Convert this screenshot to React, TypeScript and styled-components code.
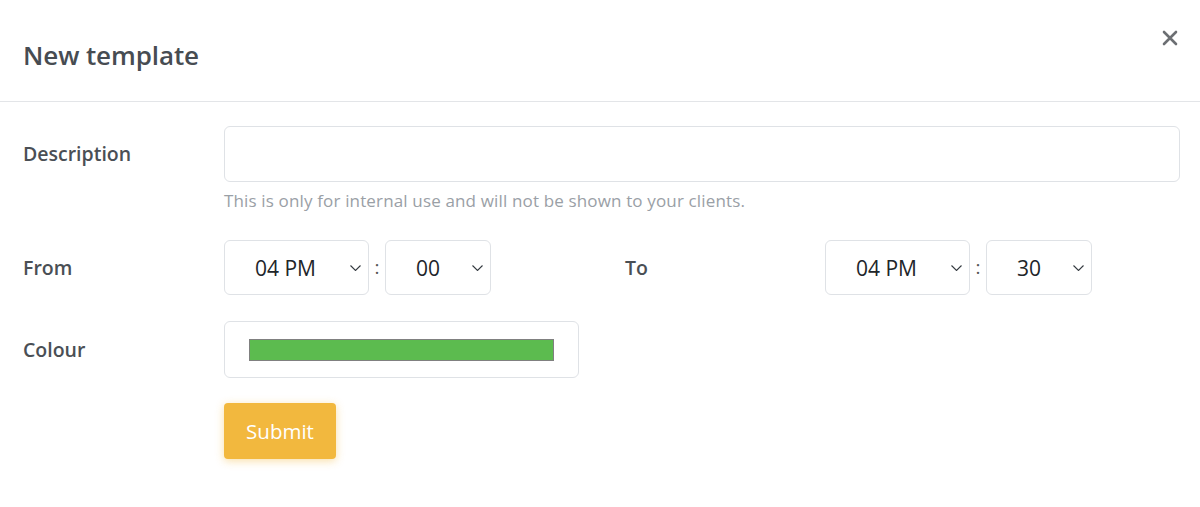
import React from "react";
import styled, { createGlobalStyle } from "styled-components";

const Global = createGlobalStyle`
  html, body { margin: 0; padding: 0; background: #fff; }
  body { font-family: "Open Sans", "Noto Sans", Arial, sans-serif; color: #495057; }
  * { box-sizing: border-box; }
`;

const Modal = styled.div`
  width: 1200px;
  height: 507px;
  background: #fff;
  display: flex;
  flex-direction: column;
`;

const Header = styled.div`
  height: 102px;
  border-bottom: 1px solid #e3e5e8;
  display: flex;
  align-items: flex-start;
  justify-content: space-between;
  padding: 0 20px 0 23px;
`;

const Title = styled.h1`
  margin: 0;
  padding-top: 38px;
  font-size: 26px;
  font-weight: 600;
  letter-spacing: -0.1px;
  color: #474c52;
  line-height: 34px;
`;

const Close = styled.button`
  border: none;
  background: none;
  padding: 0;
  margin-top: 28px;
  width: 20px;
  height: 20px;
  display: flex;
  align-items: center;
  justify-content: center;
  cursor: pointer;
`;

const Body = styled.div`
  padding: 24px 20px 0 23px;
  display: flex;
  flex-direction: column;
`;

const Row = styled.div<{ $mb: number; $top?: boolean }>`
  display: grid;
  grid-template-columns: 201px 401px 200px 1fr;
  align-items: ${(p) => (p.$top ? "start" : "center")};
  margin-bottom: ${(p) => p.$mb}px;
`;

const Label = styled.label<{ $lh?: number }>`
  font-size: 19.5px;
  font-weight: 600;
  color: #4a4f55;
  line-height: ${(p) => (p.$lh ? `${p.$lh}px` : "normal")};
`;

const Field = styled.div<{ $span?: number }>`
  grid-column: span ${(p) => p.$span ?? 1};
  display: flex;
  flex-direction: column;
`;

const TextInput = styled.input`
  height: 56px;
  width: 100%;
  border: 1px solid #dfe2e6;
  border-radius: 6px;
  font-family: inherit;
  font-size: 18px;
  padding: 0 14px;
  outline: none;
`;

const Help = styled.div`
  margin-top: 9px;
  font-size: 17px;
  letter-spacing: 0.15px;
  color: #9aa0a6;
  line-height: 20px;
`;

const TimeGroup = styled.div`
  display: flex;
  align-items: center;
`;

const SelectBox = styled.div<{ $w: number }>`
  position: relative;
  width: ${(p) => p.$w}px;
  height: 55px;
  border: 1px solid #dfe2e6;
  border-radius: 6px;
  display: flex;
  align-items: center;
  padding-left: 30px;
  font-size: 21px;
  color: #212529;
`;

const Chevron = styled.svg`
  position: absolute;
  right: 7px;
  top: 50%;
  margin-top: -3px;
`;

const Colon = styled.span`
  width: 16px;
  text-align: center;
  font-size: 19px;
  color: #555;
  padding-bottom: 2px;
`;

const ColourBox = styled.div`
  width: 355px;
  height: 57px;
  border: 1px solid #dfe2e6;
  border-radius: 6px;
  display: flex;
  align-items: center;
  padding-left: 24px;
`;

const Swatch = styled.div`
  width: 305px;
  height: 22px;
  background: #5cbb4f;
  border: 1px solid #808080;
`;

const SubmitRow = styled.div`
  padding-left: 201px;
`;

const Submit = styled.button`
  width: 112px;
  height: 56px;
  border: none;
  border-radius: 4px;
  background: #f2b83e;
  color: #fff;
  font-family: inherit;
  font-size: 20.5px;
  box-shadow: 0 2px 8px rgba(242, 184, 62, 0.45);
  cursor: pointer;
`;

const ChevronIcon = () => (
  <Chevron width="11" height="6" viewBox="0 0 11 6">
    <path d="M0.5 0.5l5 5 5-5" fill="none" stroke="#343a40" strokeWidth="1.1" />
  </Chevron>
);

const Select = ({ value, w }: { value: string; w: number }) => (
  <SelectBox $w={w}>
    {value}
    <ChevronIcon />
  </SelectBox>
);

const Time = ({ h, m }: { h: string; m: string }) => (
  <TimeGroup>
    <Select value={h} w={145} />
    <Colon>:</Colon>
    <Select value={m} w={106} />
  </TimeGroup>
);

export default function App() {
  return (
    <Modal>
      <Global />
      <Header>
        <Title>New template</Title>
        <Close aria-label="close">
          <svg width="16" height="16" viewBox="0 0 16 16">
            <path d="M2 2l12 12M14 2L2 14" stroke="#6c6f73" strokeWidth="2.6" strokeLinecap="round" />
          </svg>
        </Close>
      </Header>
      <Body>
        <Row $mb={29} $top>
          <Label $lh={56}>Description</Label>
          <Field $span={3}>
            <TextInput />
            <Help>This is only for internal use and will not be shown to your clients.</Help>
          </Field>
        </Row>
        <Row $mb={26}>
          <Label>From</Label>
          <Time h="04 PM" m="00" />
          <Label>To</Label>
          <Time h="04 PM" m="30" />
        </Row>
        <Row $mb={25}>
          <Label>Colour</Label>
          <Field $span={3}>
            <ColourBox>
              <Swatch />
            </ColourBox>
          </Field>
        </Row>
        <SubmitRow>
          <Submit>Submit</Submit>
        </SubmitRow>
      </Body>
    </Modal>
  );
}
